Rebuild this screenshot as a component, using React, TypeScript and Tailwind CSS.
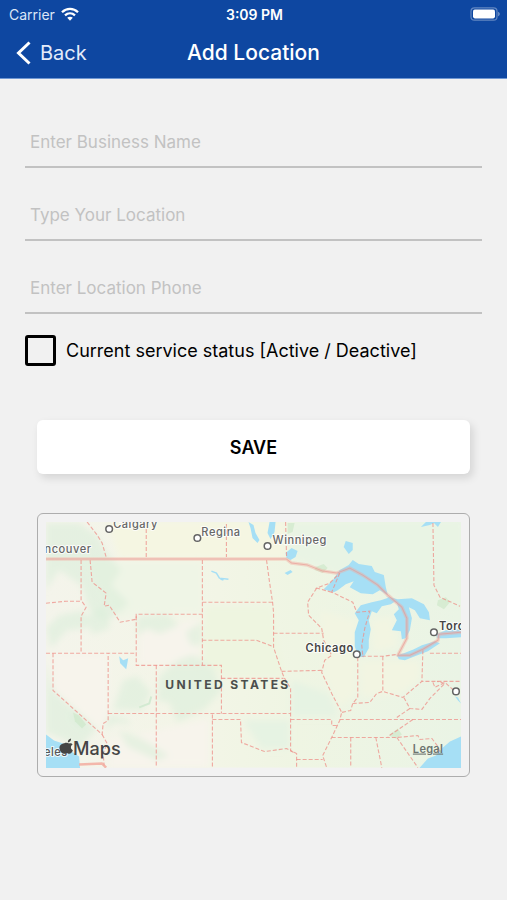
import { useState } from "react";

const fields = [
  { id: "business-name", label: "Enter Business Name", type: "text" },
  { id: "location", label: "Type Your Location", type: "text" },
  { id: "location-phone", label: "Enter Location Phone", type: "tel" },
];

const stateLines = [
  "M88 522L98 535L103 543L107 557",
  "M147 529V557",
  "M227 524V557",
  "M286 522L287 557",
  "M82 560V600L87 607L82 616V653",
  "M47 603L67 601H82",
  "M91 560L93 582L107 593L105 606L110 605L121 622L137 619V614H203",
  "M137 616V665H222V713",
  "M203 560V665",
  "M203 602H273",
  "M203 640H257L273 646",
  "M267 560L270 582L273 602L274 612V647L282 671L285 678L291 688V750L297 753V767",
  "M274 633H324",
  "M47 653H137",
  "M54 653V690L103 734L104 723L109 720V653",
  "M103 734L108 743L104 753L105 765",
  "M157 665V767",
  "M109 713H291",
  "M222 678H284",
  "M282 671L322 670",
  "M213 714V767",
  "M213 719H241L242 742L265 751L287 748L294 752",
  "M291 719H332V725L337 725",
  "M297 759H323",
  "M317 588L308 602L309 615L322 628L324 640L332 655L325 660L322 672L332 693L342 712L340 720L332 737L323 755L327 767",
  "M340 573L332 592L353 602L357 612L370 611L365 628L362 645L363 655",
  "M332 592L317 588L330 583L340 573",
  "M433 523L434 585L440 597L460 606",
  "M358 657V697L353 703L351 710L342 712",
  "M353 703L370 702L377 693L383 691L403 697L422 681H461",
  "M362 656H383L398 654",
  "M383 656V691",
  "M423 650L422 681",
  "M430 653H461",
  "M404 697L410 708L422 709L430 698L445 683L437 681M433 682L435 687L445 682L456 692",
  "M410 708L397 717",
  "M340 719H461",
  "M413 719L400 728L388 736",
  "M332 737H397L418 735L420 739L432 738L438 746L440 752",
  "M351 737V767",
  "M376 737L382 767",
  "M397 737L418 767",
];

const water = [
  // Superior
  "M324 589L333 580L340 570L349 565L353 560L359 564L372 566L375 572L384 575L386 587L388 595L380 590L373 594L361 593L350 587L354 581L346 584L338 590L334 592Z",
  // Michigan
  "M355 613L361 605L372 602L381 600L390 597L397 600L391 604L382 606L377 613L372 611L369 620L371 629L369 640L369 648L364 657L358 656L355 646L355 632L359 620Z",
  // Huron
  "M386 596L398 599L412 598L424 604L429 612L430 620L420 618L415 610L409 607L412 618L410 630L406 638L402 639L401 631L392 630L397 620L394 614L399 609L397 603Z",
  // Erie and Ontario
  "M397 655L404 653L414 649L422 645L435 641L440 643L428 651L415 656L405 660L399 659Z",
  "M436 634L446 630L461 629V637L446 638L437 638Z",
  // Nipigon
  "M344 547L346 541L353 543L353 550L349 554Z",
  // Manitoba lakes
  "M249 522L254 525L256 533L260 540L258 543L253 538L251 528Z",
  "M270 522H276L275 532L271 539L268 533Z",
  "M286 553L292 548L298 551L296 557L291 560L287 558Z",
  "M285 573L291 570L293 572L288 575Z",
  // James Bay
  "M421 527L426 522H441L438 527L434 523L430 525Z",
  // Great Salt Lake
  "M120 656L124 660L129 658L128 664L127 669L121 663Z",
  // Pacific
  "M47 734L55 740L67 744L74 752L80 756L81 768H47Z",
  // Atlantic
  "M419 768L428 758L436 755L443 747L450 741L461 736V768Z",
  "M455 696L458 697L461 703L458 700Z",
];

const forests = [
  "M80 523L98 535L108 553L122 570L112 585L130 603L108 622L90 610L82 585L60 570L47 590V523Z",
  "M60 615L84 610L88 628L68 630L52 648L47 628Z",
  "M84 618L104 606L111 628L94 634Z",
  "M138 616L168 614L180 625L160 634L148 628L138 636Z",
  "M47 662L54 690L98 728L82 746L47 732Z",
  "M74 710L88 722L82 728L72 718Z",
  "M110 714L128 719L132 724L116 722L106 730Z",
  "M124 680L138 676L152 692L143 710L114 709Z",
  "M120 730L142 738L170 755L158 760L128 746Z",
  "M178 660L194 654L214 668L222 690L206 708L178 722L170 702L158 700L160 676Z",
  "M186 632L202 622V644L192 646Z",
];

type Place = { name: string; x: number; y: number; strong?: boolean };

const places: Place[] = [
  { name: "Calgary", x: 114, y: 528 },
  { name: "Regina", x: 202, y: 536 },
  { name: "Winnipeg", x: 273, y: 544 },
  { name: "Vancouver", x: 31, y: 553 },
  { name: "Toronto", x: 439, y: 630, strong: true },
  { name: "Chicago", x: 306, y: 652, strong: true },
];

const markers = [
  [110, 529],
  [198, 538],
  [268, 546],
  [434, 632],
  [357, 654],
  [456, 691],
];

function WifiIcon() {
  return (
    <svg viewBox="0 0 18 14" className="h-[14px] w-[18px]" fill="none" stroke="white" strokeWidth="2.3" aria-hidden="true">
      <path d="M1 5.2C5.6.7 12.4.7 17 5.2" />
      <path d="M4 8.3c2.9-2.7 7.1-2.7 10 0" />
      <path d="M6.2 10.8c1.6-1.5 4-1.5 5.6 0L9 13.7z" fill="white" stroke="none" />
    </svg>
  );
}

function BatteryIcon() {
  return (
    <svg viewBox="0 0 31 14" className="h-[14px] w-[31px]" aria-hidden="true">
      <rect x="2" y="0.8" width="26" height="12.4" rx="3.5" fill="none" stroke="white" strokeOpacity="0.35" strokeWidth="1.2" />
      <rect x="4" y="2.6" width="22" height="8.8" rx="1.8" fill="white" />
      <path d="M29.200 4.700c2 .8 2 3.800 0 4.600z" fill="white" fillOpacity="0.45" />
    </svg>
  );
}

function UsMap() {
  return (
    <svg
      viewBox="47 522 414 245"
      preserveAspectRatio="xMidYMid slice"
      className="block w-full font-['Inter','Liberation_Sans',sans-serif]"
      role="img"
      aria-label="Map of the United States"
    >
      <defs>
        <linearGradient id="land" x1="0" y1="0" x2="1" y2="0">
          <stop offset="0" stopColor="#f4f4eb" />
          <stop offset="0.35" stopColor="#f3f5e7" />
          <stop offset="0.6" stopColor="#eff5e3" />
          <stop offset="1" stopColor="#eaf4e5" />
        </linearGradient>
        <filter id="soft" x="-20%" y="-20%" width="140%" height="140%">
          <feGaussianBlur stdDeviation="3" />
        </filter>
      </defs>
      <rect x="47" y="522" width="414" height="245" fill="url(#land)" />
      <g filter="url(#soft)">
        <path d="M108 522H286V558H120Z" fill="#f5f6e2" />
        <path d="M290 522H461V610L380 590L330 570L290 558Z" fill="#e9f4e4" />
        <path d="M55 654H108V716L98 728L58 692Z" fill="#f7f4ec" />
        <path d="M88 562H202V612H138L122 620Z" fill="#eff5e6" />
        <path d="M140 632L200 618V664H140ZM110 740L210 718V767H110Z" fill="#f7f4ec" />
        <path d="M206 606H272L284 676H224L204 660Z" fill="#eef5e0" />
        <path d="M320 610L356 620V694L340 706L324 676ZM360 660H420V680L400 694L362 696ZM372 620L392 616L398 646L374 652Z" fill="#f2f5e2" />
        <path d="M244 720H290V748H262ZM292 680L330 694L338 716H292Z" fill="#e6f3e3" />
        {forests.map((d) => (
          <path key={d} d={d} fill="#dbeedb" fillOpacity="0.6" />
        ))}
      </g>
      <g fill="#cfe8ca" fillOpacity="0.7">
        <path d="M288 523H295L293 532L288 534ZM316 567L324 564L328 568L323 573L315 570Z" />
        <path d="M438 600L446 597L450 602L444 609L437 605ZM389 735L398 728L402 734L396 738Z" />
        <path d="M74 712L80 715L87 724L83 728L76 721Z" />
      </g>
      {water.map((d) => (
        <path key={d} d={d} fill="#a6dff5" />
      ))}
      <path d="M212 571L217 573L220 578L229 579M221 579L224 580" fill="none" stroke="#a6dff5" strokeWidth="1.5" />
      <path d="M140 707L150 703L152 696" fill="none" stroke="#d3ead2" strokeWidth="2" />
      <g fill="none" stroke="#ee8f88" strokeOpacity="0.75" strokeWidth="1.1" strokeDasharray="4 2">
        {stateLines.map((d) => (
          <path key={d} d={d} />
        ))}
      </g>
      <g fill="none" strokeLinejoin="round">
        <path d="M47 559H287L292 563L308 565L323 571L337 573L350 568L363 575L378 585L388 595L402 607L407 618L407 638L398 655L410 655L423 649L438 640L439 634L461 632" stroke="#f3a79b" strokeOpacity="0.4" strokeWidth="3.5" />
        <path d="M47 559H287L292 563L308 565L323 571L337 573L350 568L363 575L378 585L388 595L402 607L407 618L407 638L398 655L410 655L423 649L438 640L439 634L461 632" stroke="#e9958f" strokeOpacity="0.6" strokeWidth="1" />
        <path d="M80 764L103 763L107 767" stroke="#f3a79b" strokeOpacity="0.8" strokeWidth="2.5" />
      </g>
      <g fill="white" stroke="#646464" strokeWidth="1.5">
        {markers.map(([x, y]) => (
          <circle key={x} cx={x} cy={y} r="3.3" />
        ))}
      </g>
      <g className="text-[11px] tracking-wider" stroke="white" strokeOpacity="0.8" strokeWidth="2" paintOrder="stroke" strokeLinejoin="round">
        {places.map((p) => (
          <text key={p.name} x={p.x} y={p.y} fill={p.strong ? "#454545" : "#666666"} className={p.strong ? "font-semibold" : "font-medium"}>
            {p.name}
          </text>
        ))}
        <text x="45" y="755" fill="#555555" className="font-medium">
          eles
        </text>
      </g>
      <text x="166" y="689" fill="#4b4f4d" className="text-[12px] font-bold tracking-[0.2em]">
        UNITED STATES
      </text>
      <g fill="#454545">
        <path d="M70 743c-1.600-1-3.600-.7-4.700-.3-3.500.3-5.500 3-4.700 6 .8 3.300 3.200 5 5 4.400 1.500-.5 2.400-.5 3.800 0 2 .6 3.600-1.300 4.400-3.500-2.500-1.200-2.600-4.300-.2-5.600-.9-1.200-2.200-1.700-3.600-1zM68.800 742c-.2-2 1.300-3.700 3.200-4 .2 2.200-1.300 3.800-3.200 4z" />
        <text x="74" y="754" className="text-[18px] font-medium">
          Maps
        </text>
      </g>
      <a href="#legal">
        <text x="413" y="752" fill="#6d7470" className="text-[11px] font-semibold tracking-wide underline">
          Legal
        </text>
      </a>
    </svg>
  );
}

export default function App() {
  const [active, setActive] = useState(false);

  return (
    <div className="min-h-screen bg-[#f1f1f1] font-['Inter','Liberation_Sans',sans-serif] text-black">
      <header className="border-b border-[#6f97d3] bg-[#0e47a1] text-white">
        <div className="grid h-7 grid-cols-3 items-center pr-[7px] pl-[9px] text-[14px]">
          <div className="flex items-center gap-[6px] text-[#dbe6f7]">
            <span>Carrier</span>
            <WifiIcon />
          </div>
          <span className="text-center font-semibold">3:09 PM</span>
          <div className="flex justify-end">
            <BatteryIcon />
          </div>
        </div>
        <div className="grid h-[50px] grid-cols-[1fr_auto_1fr] items-center px-4">
          <button type="button" className="flex items-center gap-2 text-[20px] text-[#e3ecfa]">
            <svg viewBox="0 0 16 24" className="h-6 w-4" fill="none" stroke="white" strokeWidth="3" aria-hidden="true">
              <path d="M13.500 1.500L2.500 12l11 10.500" />
            </svg>
            Back
          </button>
          <h1 className="text-[21px] font-medium">Add Location</h1>
        </div>
      </header>

      <form className="px-[25px] pt-[39px]" onSubmit={(e) => e.preventDefault()}>
        <div className="flex flex-col gap-[23px]">
          {fields.map((f) => (
            <input
              key={f.id}
              id={f.id}
              type={f.type}
              aria-label={f.label}
              placeholder={f.label}
              className="h-[50px] w-full border-b-2 border-[#c2c2c2] bg-transparent px-[5px] text-[17px] outline-none placeholder:text-[#c2c2c2]"
            />
          ))}
        </div>

        <label className="mt-[21px] flex items-center gap-[10px] text-[18px]">
          <input
            type="checkbox"
            checked={active}
            onChange={(e) => setActive(e.target.checked)}
            className="size-[31px] shrink-0 appearance-none rounded-[3px] border-3 border-black checked:bg-black"
          />
          Current service status [Active / Deactive]
        </label>

        <div className="px-3">
          <button
            type="submit"
            className="mt-[54px] h-[54px] w-full rounded-md bg-white text-[18px] font-semibold shadow-[3px_4px_8px_rgba(0,0,0,0.12)]"
          >
            SAVE
          </button>
          <div className="mt-[39px] rounded-md border border-[#adadad] bg-[#f2f2f2] p-2">
            <UsMap />
          </div>
        </div>
      </form>
    </div>
  );
}
